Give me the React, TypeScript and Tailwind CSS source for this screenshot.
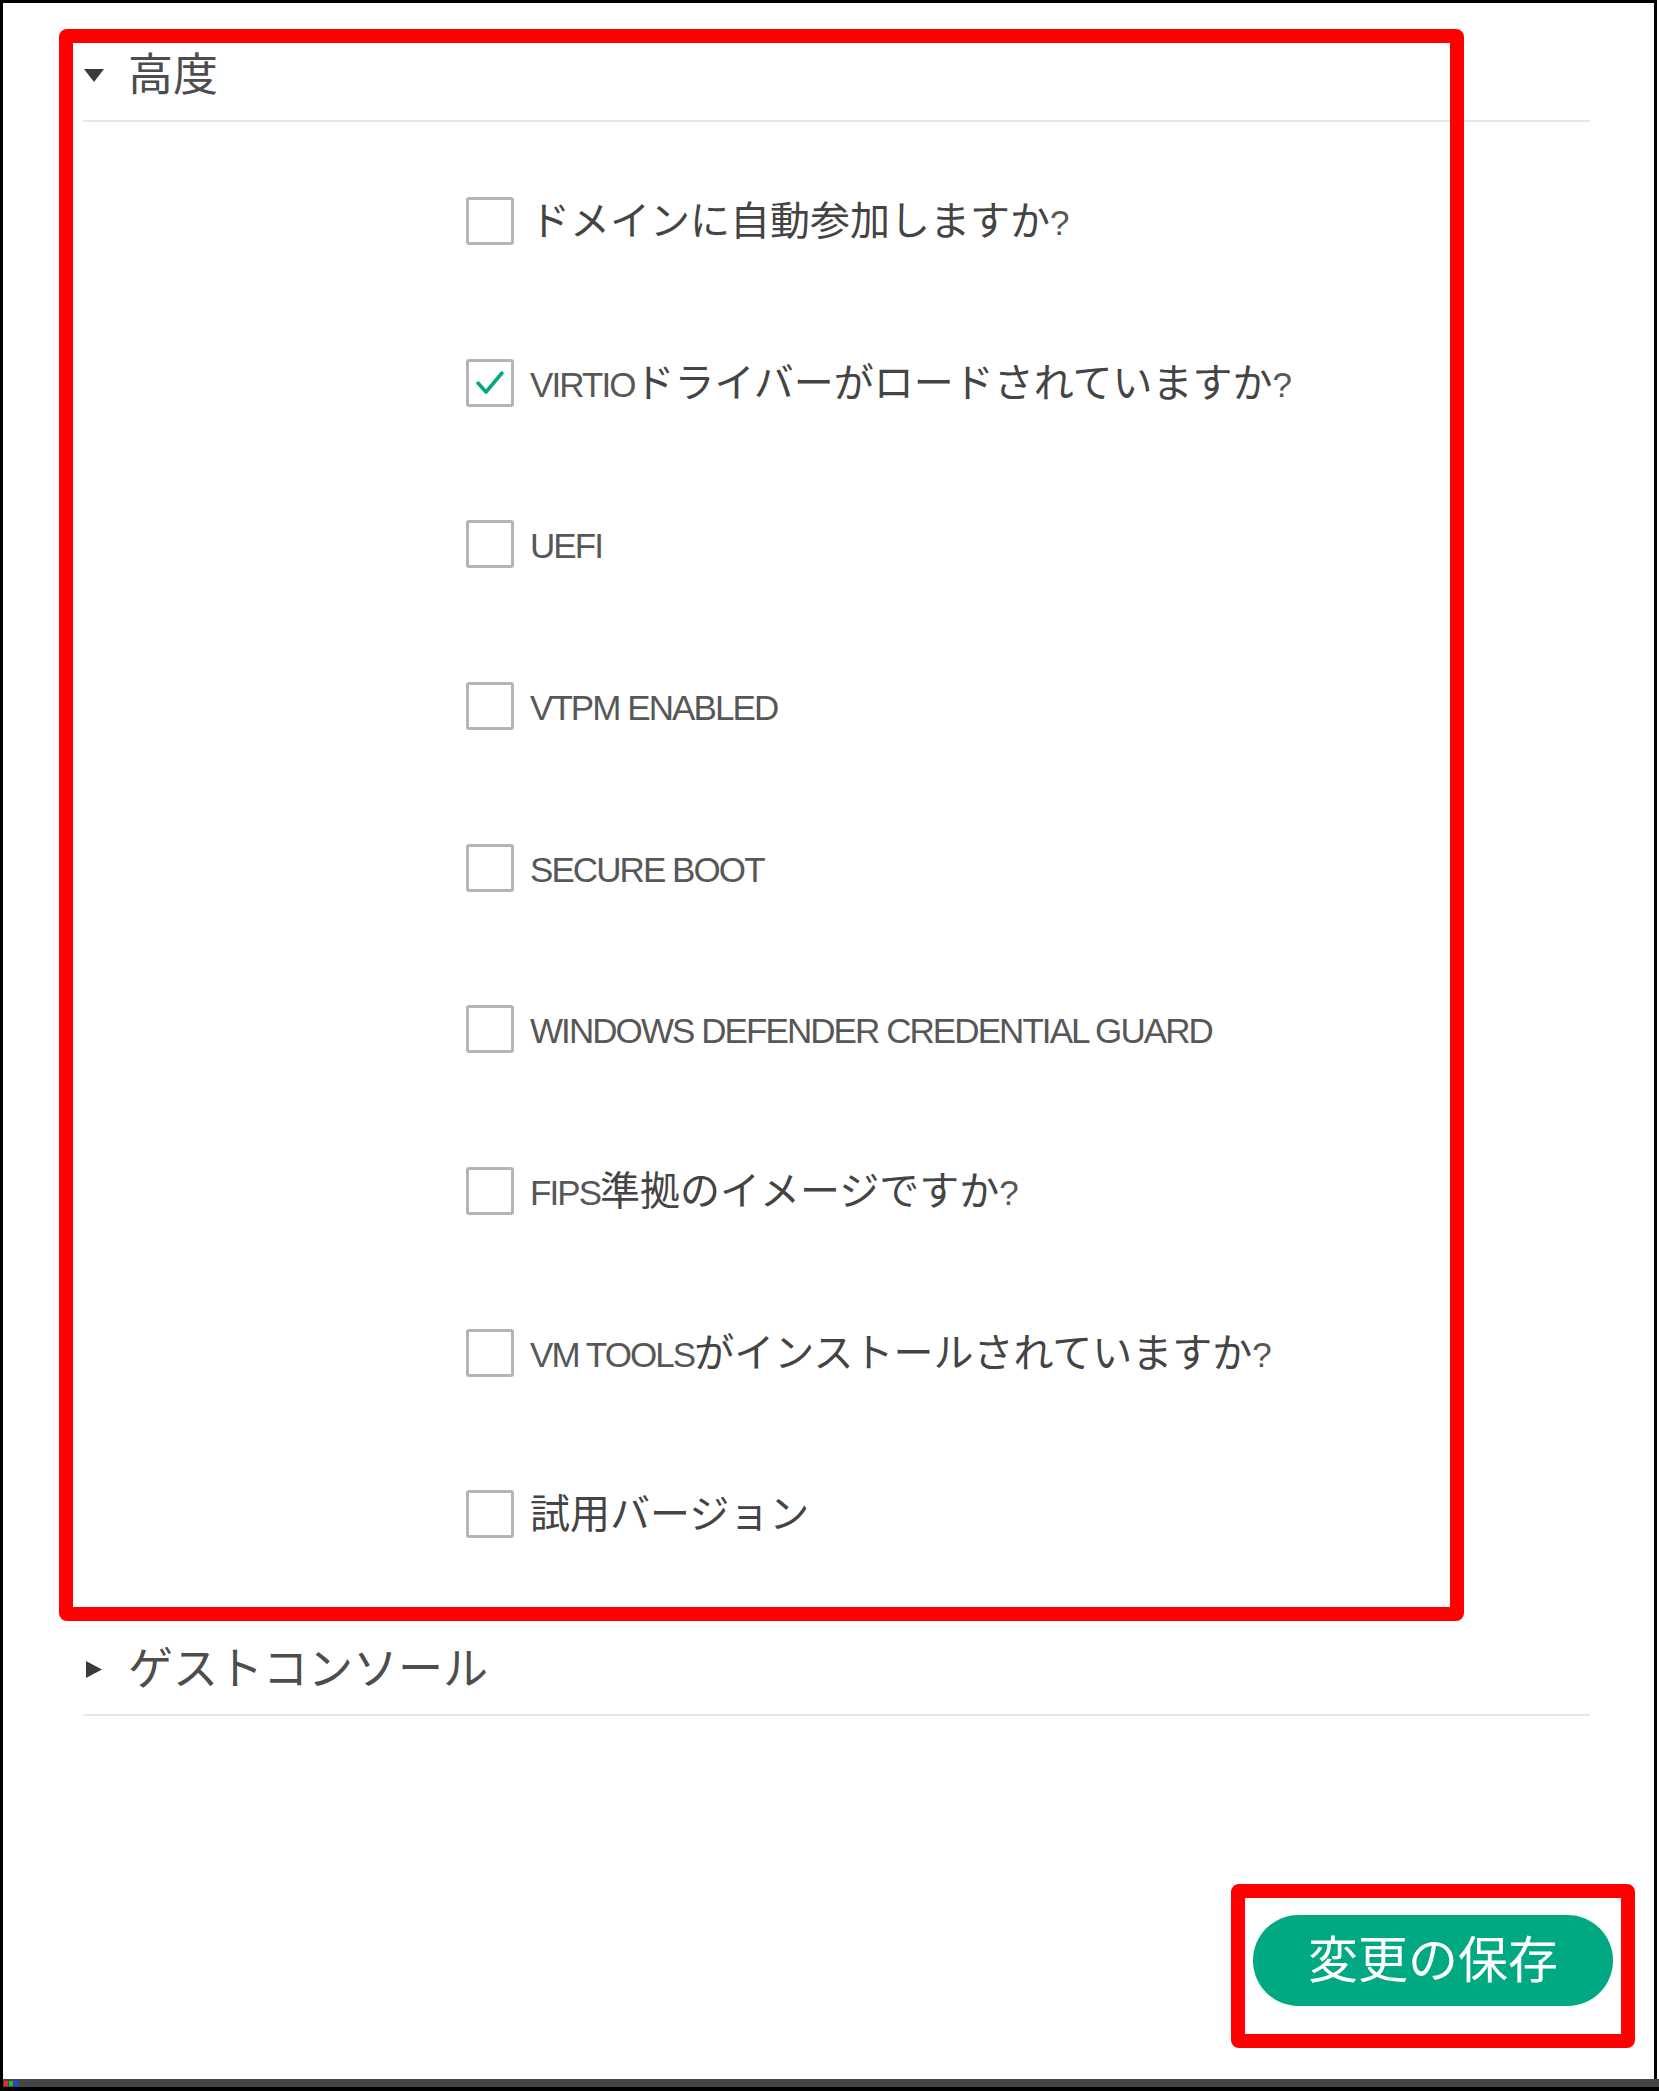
import React from "react";

const options = [
  { label: "ドメインに自動参加しますか?", checked: false },
  { label: "VIRTIOドライバーがロードされていますか?", checked: true },
  { label: "UEFI", checked: false },
  { label: "VTPM ENABLED", checked: false },
  { label: "SECURE BOOT", checked: false },
  { label: "WINDOWS DEFENDER CREDENTIAL GUARD", checked: false },
  { label: "FIPS準拠のイメージですか?", checked: false },
  { label: "VM TOOLSがインストールされていますか?", checked: false },
  { label: "試用バージョン", checked: false },
];

// split label into latin / japanese runs so latin can be narrower
function Label({ text }: { text: string }) {
  const parts = text.match(/[A-Za-z0-9 ?]+|[^A-Za-z0-9 ?]+/g) || [];
  return (
    <span className="text-[40px] leading-none text-[#444] whitespace-nowrap">
      {parts.map((p, i) =>
        /[A-Za-z0-9 ?]/.test(p[0]) ? (
          <span key={i} className="text-[35px] tracking-[-0.055em] text-[#575757]">
            {p}
          </span>
        ) : (
          <span key={i}>{p}</span>
        )
      )}
    </span>
  );
}

function Checkbox({ checked }: { checked: boolean }) {
  return (
    <div className="w-[48px] h-[48px] shrink-0 rounded-[3px] border-[3px] border-[#b5b5b5] bg-white flex items-center justify-center">
      {checked && (
        <svg width="36" height="36" viewBox="0 0 36 36">
          <path d="M6 18 L14 27 L30 8" fill="none" stroke="#01a982" strokeWidth="3.5" strokeLinecap="round" strokeLinejoin="round" />
        </svg>
      )}
    </div>
  );
}

function SectionHeader({ title, open }: { title: string; open: boolean }) {
  return (
    <div className="h-[92px] w-[1507px] flex items-center border-b-2 border-[#e6e6e6]">
      <div className="w-[22px] flex justify-center">
        {open ? (
          <svg width="22" height="15" viewBox="0 0 22 15">
            <path d="M1 1 L21 1 L11 14 Z" fill="#3a3a3a" />
          </svg>
        ) : (
          <svg width="18" height="19" viewBox="0 0 18 19">
            <path d="M1 1 L17 9.5 L1 18 Z" fill="#3a3a3a" />
          </svg>
        )}
      </div>
      <span className="ml-[23px] text-[45px] leading-none text-[#4d4d4d]">{title}</span>
    </div>
  );
}

export default function App() {
  return (
    <div
      className="relative w-[1659px] h-[2091px] bg-white"
      style={{ fontFamily: '"Liberation Sans", "Noto Sans CJK JP", sans-serif' }}
    >
      <div className="w-[1657px] h-[2079px] border-t-[3px] border-x-[3px] border-black pt-[27px] pl-[80px] flex flex-col">
        <SectionHeader title="高度" open />

        <div className="mt-[18px] flex flex-col">
          {options.map((o) => (
            <div key={o.label} className="h-[161.7px] flex items-center pl-[383px] gap-[16px]">
              <Checkbox checked={o.checked} />
              <Label text={o.label} />
            </div>
          ))}
        </div>

        <div className="mt-[29px]">
          <SectionHeader title="ゲストコンソール" open={false} />
        </div>

        <div className="mt-[199px] flex justify-end pr-[41px]">
          <button className="w-[360px] h-[91px] rounded-full bg-[#01a982] text-white text-[50px] leading-none flex items-center justify-center">
            変更の保存
          </button>
        </div>
      </div>

      {/* bottom bar */}
      <div className="h-[12px] w-full flex flex-col">
        <div className="h-[8px] bg-[#454545] border-l-[3px] border-black flex items-center gap-[1px] pl-[1px]">
          <div className="w-[4px] h-[5px] bg-[#ff2020]" />
          <div className="w-[4px] h-[5px] bg-[#20c020]" />
          <div className="w-[4px] h-[5px] bg-[#2040ff]" />
        </div>
        <div className="h-[4px] bg-black" />
      </div>

      {/* annotation boxes */}
      <div className="absolute left-[59px] top-[29px] w-[1405px] h-[1592px] border-[14px] border-[#ff0000] rounded-[8px]" />
      <div className="absolute left-[1231px] top-[1884px] w-[404px] h-[164px] border-[14px] border-[#ff0000] rounded-[8px]" />
    </div>
  );
}
